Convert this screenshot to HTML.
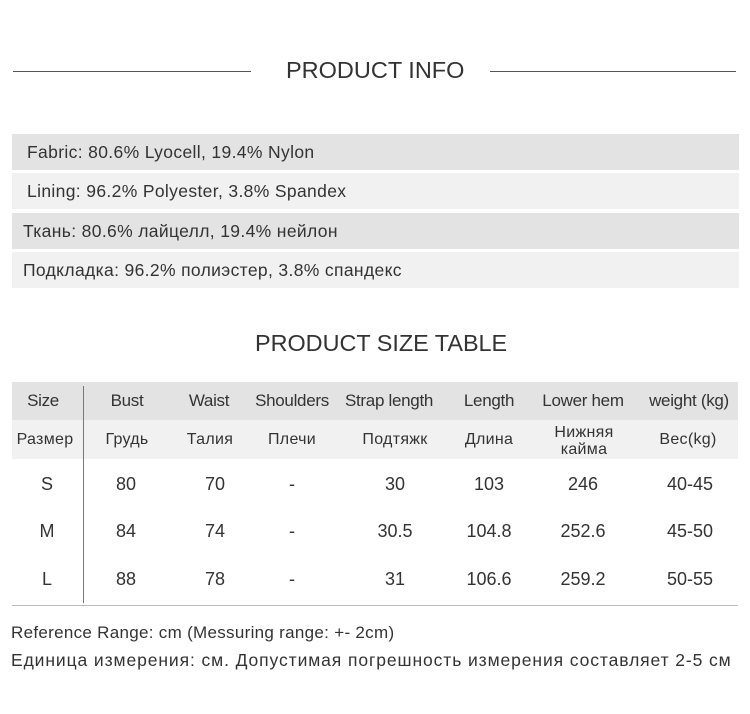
<!DOCTYPE html>
<html><head><meta charset="utf-8"><style>
body{margin:0;width:750px;height:714px;background:#fff;position:relative;overflow:hidden;font-family:"Liberation Sans","DejaVu Sans",sans-serif;color:#333}
.a{position:absolute;white-space:nowrap}
.line{position:absolute;height:1px;background:#555}
.row{position:absolute;left:12px;width:727px;height:36px;font-size:17.5px;line-height:36px;letter-spacing:0.35px}
.c{position:absolute;transform:translateX(-50%);white-space:nowrap;text-align:center}
</style></head><body>
<div class="line" style="left:13px;top:71px;width:238px"></div>
<div class="line" style="left:490px;top:71px;width:246px"></div>
<div class="a" style="left:286px;top:57px;font-size:23.5px;color:#333">PRODUCT INFO</div>
<div class="row" style="top:134px;background:#e3e3e3;padding-left:15px;box-sizing:border-box">Fabric: 80.6% Lyocell, 19.4% Nylon</div>
<div class="row" style="top:173px;background:#f1f1f1;padding-left:15px;box-sizing:border-box">Lining: 96.2% Polyester, 3.8% Spandex</div>
<div class="row" style="top:213px;background:#e3e3e3;padding-left:11px;box-sizing:border-box">Ткань: 80.6% лайцелл, 19.4% нейлон</div>
<div class="row" style="top:252px;background:#f1f1f1;padding-left:11px;box-sizing:border-box">Подкладка: 96.2% полиэстер, 3.8% спандекс</div>
<div class="a" style="left:255px;top:330px;font-size:23.4px">PRODUCT SIZE TABLE</div>
<div style="position:absolute;left:12px;top:382px;width:726px;height:38px;background:#e3e3e3"></div>
<div style="position:absolute;left:12px;top:420px;width:726px;height:39px;background:#f1f1f1"></div>
<div style="position:absolute;left:83px;top:386px;width:1px;height:217px;background:#777"></div>
<div style="position:absolute;left:12px;top:605px;width:726px;height:1px;background:#bbb"></div>
<div style="position:absolute;top:391px;left:0;width:750px;font-size:17px;letter-spacing:-0.3px">
<span class="c" style="left:43px">Size</span><span class="c" style="left:127px">Bust</span><span class="c" style="left:209px">Waist</span><span class="c" style="left:292px">Shoulders</span><span class="c" style="left:389px">Strap length</span><span class="c" style="left:489px">Length</span><span class="c" style="left:583px">Lower hem</span><span class="c" style="left:689px">weight (kg)</span></div>
<div style="position:absolute;top:431px;left:0;width:750px;font-size:16px;letter-spacing:0.3px">
<span class="c" style="left:45px">Размер</span><span class="c" style="left:127px">Грудь</span><span class="c" style="left:210px">Талия</span><span class="c" style="left:292px">Плечи</span><span class="c" style="left:395px">Подтяжк</span><span class="c" style="left:489px">Длина</span><span class="c" style="left:584px;top:-7px;line-height:17px">Нижняя<br>кайма</span><span class="c" style="left:688px">Вес(kg)</span></div>
<div style="position:absolute;top:474px;left:0;width:750px;font-size:18px">
<span class="c" style="left:47px">S</span><span class="c" style="left:126px">80</span><span class="c" style="left:215px">70</span><span class="c" style="left:292px">-</span><span class="c" style="left:395px">30</span><span class="c" style="left:489px">103</span><span class="c" style="left:583px">246</span><span class="c" style="left:690px">40-45</span></div>
<div style="position:absolute;top:521px;left:0;width:750px;font-size:18px">
<span class="c" style="left:47px">M</span><span class="c" style="left:126px">84</span><span class="c" style="left:215px">74</span><span class="c" style="left:292px">-</span><span class="c" style="left:395px">30.5</span><span class="c" style="left:489px">104.8</span><span class="c" style="left:583px">252.6</span><span class="c" style="left:690px">45-50</span></div>
<div style="position:absolute;top:569px;left:0;width:750px;font-size:18px">
<span class="c" style="left:47px">L</span><span class="c" style="left:126px">88</span><span class="c" style="left:215px">78</span><span class="c" style="left:292px">-</span><span class="c" style="left:395px">31</span><span class="c" style="left:489px">106.6</span><span class="c" style="left:583px">259.2</span><span class="c" style="left:690px">50-55</span></div>
<div class="a" style="left:11px;top:623px;font-size:17px;letter-spacing:0.3px">Reference Range: cm (Messuring range: +- 2cm)</div>
<div class="a" style="left:11px;top:650px;font-size:17.5px;letter-spacing:0.9px">Единица измерения: см. Допустимая погрешность измерения составляет 2-5 см</div>
</body></html>
